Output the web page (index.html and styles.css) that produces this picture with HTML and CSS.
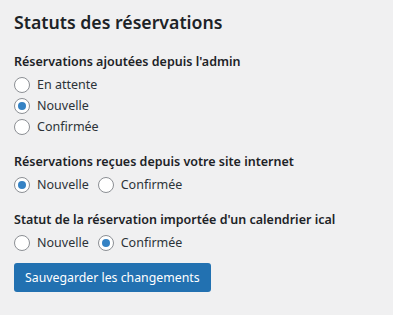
FILE: index.html
```html
<!DOCTYPE html>
<html lang="fr">
<head>
    <meta charset="UTF-8">
    <meta name="viewport" content="width=device-width, initial-scale=1.0">
    <title>Statuts des réservations</title>
    <link rel="stylesheet" href="styles.css">
</head>
<body>

    <!-- Booking status settings -->
    <form class="settings">
        <h2 class="settings-title">Statuts des réservations</h2>

        <div class="field">
            <div class="field-label">Réservations ajoutées depuis l'admin</div>
            <div class="options stacked">
                <label><input type="radio" name="admin"> En attente</label>
                <label><input type="radio" name="admin" checked> Nouvelle</label>
                <label><input type="radio" name="admin"> Confirmée</label>
            </div>
        </div>

        <div class="field">
            <div class="field-label">Réservations reçues depuis votre site internet</div>
            <div class="options">
                <label><input type="radio" name="site" checked> Nouvelle</label>
                <label><input type="radio" name="site"> Confirmée</label>
            </div>
        </div>

        <div class="field">
            <div class="field-label">Statut de la réservation importée d'un calendrier ical</div>
            <div class="options">
                <label><input type="radio" name="ical"> Nouvelle</label>
                <label><input type="radio" name="ical" checked> Confirmée</label>
            </div>
        </div>

        <button type="button" class="save-btn">Sauvegarder les changements</button>
    </form>

</body>
</html>
```

FILE: styles.css
```css
/* Page */
body {
    margin: 0;
    background-color: #f0f0f1;
    color: #1d2327;
    font-family: "Noto Sans", "Open Sans", sans-serif;
    font-size: 12.5px;
}
.settings {
    padding: 11px 14px;
}
.settings-title {
    margin: 0 0 20px;
    font-size: 17.7px;
    font-weight: 600;
    line-height: 22px;
}

/* Fields */
.field + .field {
    margin-top: 16px;
}
.field-label {
    font-weight: 600;
    line-height: 18px;
    margin-bottom: 3px;
}
.options {
    display: flex;
    gap: 9px;
}
.options.stacked {
    flex-direction: column;
    gap: 0;
}
.options label {
    display: flex;
    align-items: center;
    gap: 7px;
    height: 21px;
    color: #2c3338;
}

/* Radios */
.options input {
    appearance: none;
    margin: 0;
    width: 16px;
    height: 16px;
    border: 1px solid #8c8f94;
    border-radius: 50%;
    background-color: #fff;
    display: grid;
    place-items: center;
}
.options input:checked::before {
    content: "";
    width: 8px;
    height: 8px;
    border-radius: 50%;
    background-color: #3582c4;
}

/* Button */
.save-btn {
    display: block;
    margin-top: 10px;
    height: 29px;
    padding: 0 11px;
    border: none;
    border-radius: 3px;
    background-color: #2271b1;
    color: #fff;
    font-family: inherit;
    font-size: 12.3px;
}
```
